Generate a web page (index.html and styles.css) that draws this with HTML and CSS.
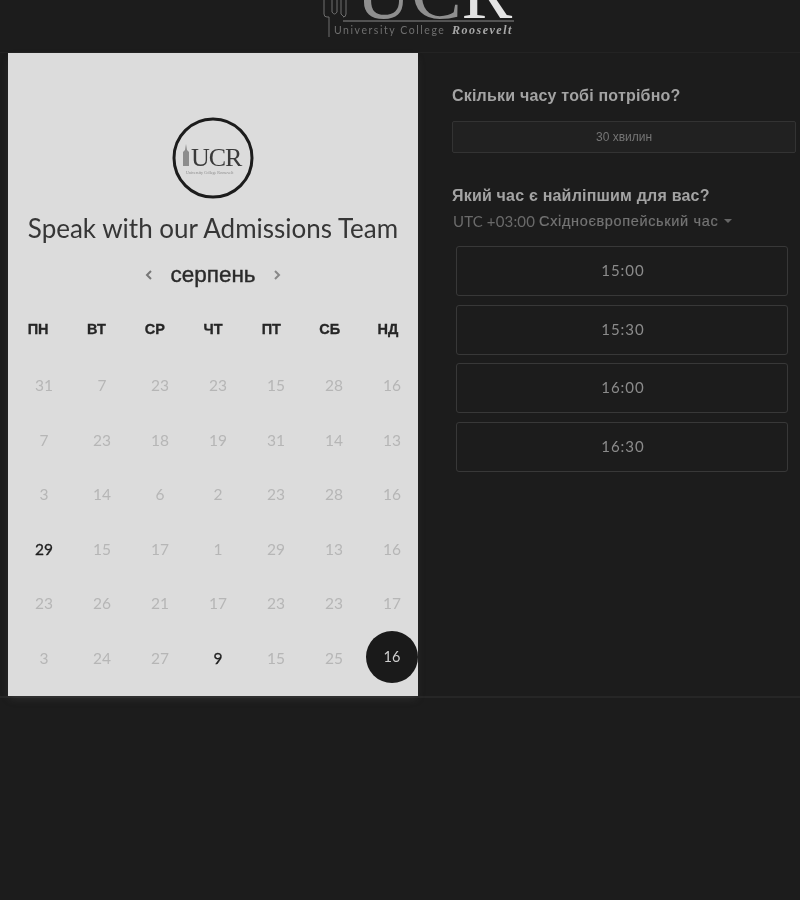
FILE: index.html
```html
<!DOCTYPE html>
<html lang="uk">
<head>
<meta charset="utf-8">
<title>Speak with our Admissions Team</title>
<link rel="stylesheet" href="styles.css">
</head>
<body>
<div class="page">
  <header class="top">
    <svg class="top-logo" width="200" height="52" viewBox="0 0 200 52">
      <g fill="none" stroke="#6e6e6e" stroke-width="1">
        <path d="M4 0V14Q4 17 7 17H9V37"/>
        <path d="M12 0V12M17 0V12M12 12Q14.500 16 17 12"/>
        <path d="M21 0V14L24 17"/>
        <path d="M26 0V14Q26 17 23 17"/>
      </g>
      <path d="M23 21H194" stroke="#8a8a8a" stroke-width="1"/>
      <text class="logo-u" x="36" y="18">UC<tspan class="logo-r">R</tspan></text>
      <text class="logo-sub" x="14" y="34">University College</text>
      <text class="logo-script" x="132" y="34">Roosevelt</text>
    </svg>
  </header>
  <main class="scheduler">
    <section class="calendar">
      <svg class="badge" width="84" height="84" viewBox="0 0 84 84">
        <circle cx="42" cy="42" r="39" fill="none" stroke="#1c1c1c" stroke-width="3"/>
        <path d="M12 50V36L14 34L15 28L16 34L18 36V50Z" fill="#8c8c8c"/>
        <text class="badge-ucr" x="20" y="50">UCR</text>
        <text class="badge-sub" x="15" y="58">University College Roosevelt</text>
      </svg>
      <h1 class="title">Speak with our Admissions Team</h1>
      <div class="month">
        <svg class="chev" width="8" height="10" viewBox="0 0 8 10"><path d="M6 1L2 5L6 9" fill="none" stroke="#777" stroke-width="2"/></svg>
        <span class="month-name">серпень</span>
        <svg class="chev" width="8" height="10" viewBox="0 0 8 10"><path d="M2 1L6 5L2 9" fill="none" stroke="#888" stroke-width="2"/></svg>
      </div>
      <div class="weekdays">
        <span>ПН</span><span>ВТ</span><span>СР</span><span>ЧТ</span><span>ПТ</span><span>СБ</span><span>НД</span>
      </div>
      <div class="days">
        <span>31</span><span>7</span><span>23</span><span>23</span><span>15</span><span>28</span><span>16</span>
        <span>7</span><span>23</span><span>18</span><span>19</span><span>31</span><span>14</span><span>13</span>
        <span>3</span><span>14</span><span>6</span><span>2</span><span>23</span><span>28</span><span>16</span>
        <span class="on">29</span><span>15</span><span>17</span><span>1</span><span>29</span><span>13</span><span>16</span>
        <span>23</span><span>26</span><span>21</span><span>17</span><span>23</span><span>23</span><span>17</span>
        <span>3</span><span>24</span><span>27</span><span class="on">9</span><span>15</span><span>25</span><span class="picked"><b>16</b></span>
      </div>
    </section>
    <section class="times">
      <h2 class="q q-first">Скільки часу тобі потрібно?</h2>
      <div class="duration">30 хвилин</div>
      <h2 class="q q-second">Який час є найліпшим для вас?</h2>
      <div class="zone">UTC +03:00 <span class="zone-name">Східноєвропейський час</span><i class="caret"></i></div>
      <div class="slots">
        <div class="slot">15:00</div>
        <div class="slot">15:30</div>
        <div class="slot">16:00</div>
        <div class="slot">16:30</div>
      </div>
    </section>
  </main>
</div>
</body>
</html>
```
FILE: styles.css
```css
html, body {
  margin: 0;
  background: #1c1c1c;
}
.page {
  width: 800px;
  height: 900px;
  overflow: hidden;
  background: #1c1c1c;
  filter: blur(0.45px);
  font-family: "Liberation Sans", Arial, sans-serif;
}
.top {
  height: 52px;
  border-bottom: 1px solid #232323;
  display: flex;
  justify-content: center;
  padding-left: 40px;
}
.top-logo { display: block; }
.logo-u { font: 76px "Liberation Serif", serif; fill: #8f8f8f; }
.logo-r { fill: #e4e4e4; }
.logo-sub { font: 10.500px "Lato", sans-serif; letter-spacing: 1.550px; fill: #6f6f6f; }
.logo-script { font: italic bold 12px "Liberation Serif", serif; letter-spacing: 1.500px; fill: #a8a8a8; }

.scheduler {
  display: flex;
  height: 643px;
  border-bottom: 2px solid #262626;
  padding-left: 8px;
}
.calendar {
  width: 410px;
  flex: none;
  background: #dcdcdc;
  box-shadow: 0 4px 8px -2px rgba(90, 90, 90, 0.35);
  padding-top: 63px;
  box-sizing: border-box;
  display: flex;
  flex-direction: column;
}
.badge {
  display: block;
  margin: 0 auto;
}
.badge-ucr { font: 26px "Liberation Serif", serif; letter-spacing: -1px; fill: #3a3a3a; }
.badge-sub { font: 4px "Liberation Serif", serif; fill: #8a8a8a; }
.title {
  margin: 12px 0 0;
  text-align: center;
  font: 400 26px/32px "Lato", sans-serif;
  color: #363636;
  white-space: nowrap;
}
.month {
  margin-top: 15px;
  height: 32px;
  display: flex;
  align-items: center;
  justify-content: center;
  gap: 17px;
}
.month-name {
  font-size: 22.500px;
  color: #2a2a2a;
  -webkit-text-stroke: 0.4px #2a2a2a;
}
.chev { display: block; }
.weekdays {
  margin-top: 29px;
  padding-left: 1px;
  display: grid;
  grid-template-columns: repeat(7, 58.300px);
  height: 18px;
}
.weekdays span {
  text-align: center;
  font-size: 14.500px;
  line-height: 18px;
  font-weight: 700;
  color: #262626;
  -webkit-text-stroke: 0.3px #262626;
}
.days {
  margin-top: 20px;
  padding-left: 7px;
  display: grid;
  grid-template-columns: repeat(7, 58px);
  grid-auto-rows: 54.500px;
}
.days span {
  display: flex;
  align-items: center;
  justify-content: center;
  font: 400 15.500px "Lato", sans-serif;
  color: #b6b6b6;
}
.days .on {
  color: #1f1f1f;
  -webkit-text-stroke: 0.3px #1f1f1f;
}
.days .picked {
  width: 52px;
  height: 52px;
  margin-left: 3px;
  border-radius: 50%;
  background: #1a1a1a;
  color: #cfcfcf;
}
.days .picked b { font-weight: 400; font-size: 14.500px; }

.times {
  flex: 1;
  min-width: 0;
  padding-left: 34px;
}
.q {
  margin: 0;
  font-size: 16px;
  line-height: 20px;
  font-weight: 700;
  color: #a3a3a3;
  letter-spacing: 0.200px;
  white-space: nowrap;
}
.q-first { margin-top: 33px; }
.q-second { margin-top: 33px; }
.duration {
  margin-top: 15px;
  width: 344px;
  height: 32px;
  box-sizing: border-box;
  border: 1px solid #333;
  border-radius: 2px;
  background: #212121;
  display: flex;
  align-items: center;
  justify-content: center;
  font-size: 12px;
  color: #757575;
}
.zone {
  margin: 5px 0 0 1px;
  height: 20px;
  display: flex;
  align-items: center;
  font: 400 15px "Lato", sans-serif;
  letter-spacing: 0.150px;
  color: #6a6a6a;
  white-space: pre;
}
.zone-name {
  font: 400 14.500px "Liberation Sans", Arial, sans-serif;
  letter-spacing: 0.650px;
  color: #747474;
  -webkit-text-stroke: 0.2px #747474;
}
.caret {
  margin-left: 6px;
  width: 0;
  height: 0;
  border: 4px solid transparent;
  border-top-color: #666;
  border-bottom: 0;
}
.slots {
  margin: 15px 0 0 4px;
  width: 332px;
  display: grid;
  grid-auto-rows: 50px;
  row-gap: 8.500px;
}
.slot {
  box-sizing: border-box;
  border: 1px solid #383838;
  border-radius: 3px;
  padding: 0 0 1.500px 2px;
  display: flex;
  align-items: center;
  justify-content: center;
  font: 400 15px "Lato", sans-serif;
  letter-spacing: 1px;
  color: #8b8b8b;
}
```
